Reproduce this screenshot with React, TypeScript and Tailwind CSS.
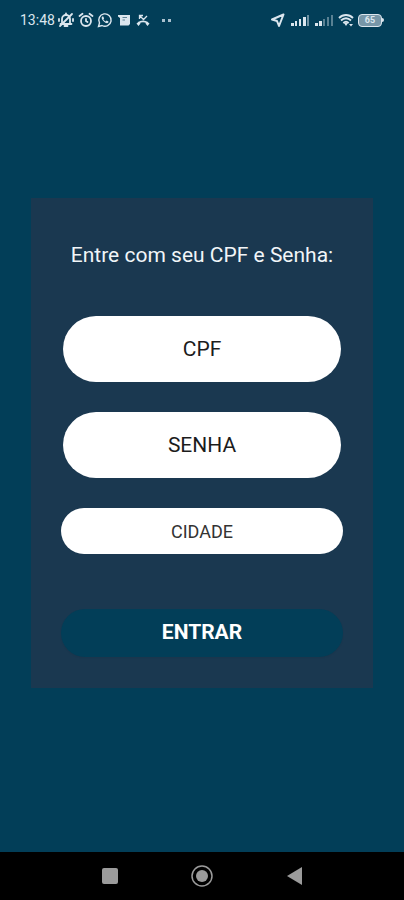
import React from 'react';

const StatusBar: React.FC = () => {
    return (
        <header className="flex h-[34px] items-center justify-between pt-1.5 pl-5 pr-5 text-[#dbe6ee]">
            <div className="flex items-center gap-[3px]">
                <span className="text-[14px] leading-4">13:48</span>

                {/* Muted bell */}
                <svg className="h-4 w-4" viewBox="0 0 16 16" fill="none" stroke="currentColor" strokeWidth={1.8} strokeLinecap="round" strokeLinejoin="round" aria-hidden="true">
                    <path d="M4 11V7a4 4 0 0 1 8 0v4l1.500 1H2.500z" />
                    <path d="M6.500 14h3M8 1.500V3M14 2 2 14M1 7v2M15 7v2" />
                </svg>

                {/* Alarm clock */}
                <svg className="ml-px h-4 w-4" viewBox="0 0 16 16" fill="none" stroke="currentColor" strokeWidth={1.8} strokeLinecap="round" aria-hidden="true">
                    <circle cx="8" cy="9" r="5" />
                    <path d="M8 7v2l1.500 1M1.500 4 4.500 1.800M14.500 4l-3-2.200" />
                </svg>

                {/* WhatsApp */}
                <svg className="h-4 w-4" viewBox="0 0 16 16" fill="none" stroke="currentColor" strokeWidth={1.4} aria-hidden="true">
                    <path d="M1.500 14.500l1-3.500a6.200 6.200 0 1 1 2.500 2.500z" />
                    <path d="M5.200 4.500c-1 1-.6 2.800 1.400 4.800s3.800 2.300 4.700 1.200l.2-1-1.900-.9-1 .9c-1-.4-1.800-1.200-2.200-2.200l.7-.9-.8-1.900z" fill="currentColor" stroke="none" />
                </svg>

                {/* Note */}
                <svg className="h-4 w-4" viewBox="0 0 16 16" aria-hidden="true">
                    <path d="M2 3h12v9L12.500 13.500H4V6L2 4.500z" fill="currentColor" />
                    <path d="M6.500 5.500h4.500M6.500 8h2.500" stroke="#5f8296" />
                </svg>

                {/* Missed call */}
                <svg className="h-4 w-4" viewBox="0 0 16 16" fill="none" stroke="currentColor" aria-hidden="true">
                    <path d="M4.500 7V3.500H8M5 4l3.500 3.500L12 4" strokeWidth={1.3} />
                    <path d="M3.500 11c2.500-2.300 6.500-2.300 9 0" strokeWidth={1.8} />
                    <path d="M1.500 11.500 4 9.500l1.500 2L3.500 14zM14.500 11.500 12 9.500l-1.500 2 2 2.500z" fill="currentColor" stroke="none" />
                </svg>
                <span className="ml-2 flex gap-[3px]">
                    <i className="size-[3px] bg-[#a9c0ce]" />
                    <i className="size-[3px] bg-[#a9c0ce]" />
                </span>
            </div>

            <div className="flex items-center gap-1">
                {/* Location */}
                <svg className="h-4 w-4" viewBox="0 0 16 16" fill="none" stroke="currentColor" strokeWidth={2} strokeLinejoin="round" aria-hidden="true">
                    <path d="M13.500 2.500 2 7.500l5 1.500 2 5z" />
                </svg>

                {/* Signal, both cards */}
                <svg className="h-4 w-5" viewBox="0 0 20 16" fill="currentColor" aria-hidden="true">
                    <path d="M1 11h3v3H1zM5 9h2v5H5zM9 7h2v7H9zM13 5h3v9h-3z" />
                    <path d="M17 3h2v11h-2z" opacity={0.5} />
                </svg>
                <svg className="h-4 w-5" viewBox="0 0 20 16" fill="currentColor" aria-hidden="true">
                    <path d="M1 11h3v3H1zM5 9h3v5H5z" />
                    <path d="M9 7h2v7H9zM13 5h2v9h-2zM17 3h2v11h-2z" opacity={0.4} />
                </svg>

                {/* Wifi */}
                <svg className="h-4 w-4" viewBox="0 0 16 16" fill="none" stroke="currentColor" strokeWidth={1.8} aria-hidden="true">
                    <path d="M1 6c4-4 10-4 14 0M3 8.500c3-3 7-3 10 0M5.300 11c1.700-1.600 3.700-1.600 5.400 0" />
                    <path d="M6 11h4l-2 3zM11 12h4l-2 2.500z" fill="currentColor" stroke="none" />
                </svg>

                {/* Battery */}
                <span className="flex items-center">
                    <span className="flex h-[13px] w-6 items-center justify-center rounded-[4px] border border-current bg-[#7796a8] text-[9px] leading-none font-bold">65</span>
                    <i className="h-1 w-0.5 rounded-r bg-current" />
                </span>
            </div>
        </header>
    );
};

const LoginForm: React.FC = () => {
    return (
        <form
            className="mx-[31px] w-full bg-[#1a3850] px-[30px] pt-[43px] pb-[31px] text-center"
            onSubmit={(e) => e.preventDefault()}
        >
            <h1 className="text-[21px] leading-7 text-[#f1f5f8]">Entre com seu CPF e Senha:</h1>

            <div className="mt-[47px] flex flex-col gap-[30px] px-0.5">
                <input
                    type="text"
                    inputMode="numeric"
                    aria-label="CPF"
                    placeholder="CPF"
                    className="h-[66px] w-full rounded-full bg-white text-center text-[21px] text-[#1c1c1c] placeholder:text-[#1c1c1c] focus:outline-none"
                />
                <input
                    type="password"
                    aria-label="Senha"
                    placeholder="SENHA"
                    className="h-[66px] w-full rounded-full bg-white text-center text-[21px] text-[#1c1c1c] placeholder:text-[#1c1c1c] focus:outline-none"
                />
            </div>

            <select
                aria-label="Cidade"
                defaultValue=""
                className="mt-[30px] block h-[46px] w-full appearance-none rounded-full bg-white text-center text-[18px] text-[#333333] focus:outline-none"
            >
                <option value="">CIDADE</option>
            </select>

            <button
                type="submit"
                className="mt-[55px] h-12 w-full rounded-full bg-[#023e58] text-[21px] font-bold text-white shadow-xs"
            >
                ENTRAR
            </button>
        </form>
    );
};

const NavigationBar: React.FC = () => {
    return (
        <nav className="flex h-12 items-center justify-center gap-[68px] bg-black text-[#9b9b9b]">
            <button type="button" aria-label="Recentes">
                <svg className="size-6" viewBox="0 0 24 24" fill="currentColor" aria-hidden="true">
                    <rect x="4" y="4" width="16" height="16" rx="2" />
                </svg>
            </button>
            <button type="button" aria-label="Início">
                <svg className="size-6" viewBox="0 0 24 24" fill="currentColor" aria-hidden="true">
                    <circle cx="12" cy="12" r="10" fill="none" stroke="currentColor" strokeWidth={1.5} />
                    <circle cx="12" cy="12" r="6" />
                </svg>
            </button>
            <button type="button" aria-label="Voltar">
                <svg className="size-6" viewBox="0 0 24 24" fill="currentColor" aria-hidden="true">
                    <path d="M20 3v18L5 12z" />
                </svg>
            </button>
        </nav>
    );
};

export default function App() {
    return (
        <div className="flex min-h-screen flex-col bg-[#023e58] font-[Roboto,sans-serif]">
            <StatusBar />
            <main className="flex flex-1 items-center justify-center">
                <LoginForm />
            </main>
            <NavigationBar />
        </div>
    );
}
